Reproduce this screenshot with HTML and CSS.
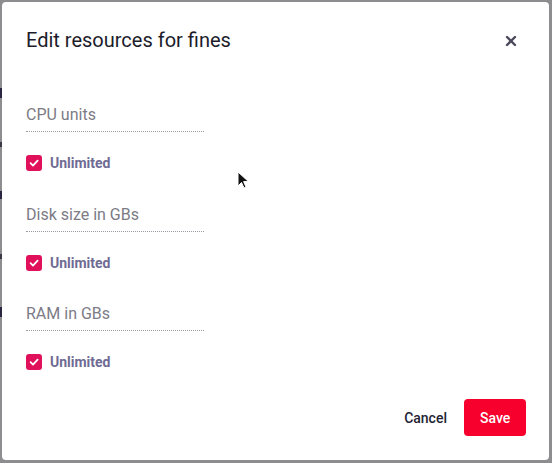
FILE: index.html
```html
<!DOCTYPE html>
<html lang="en">
<head>
<meta charset="utf-8">
<title>Edit resources for fines</title>
<link rel="stylesheet" href="styles.css">
</head>
<body>
<div class="backdrop">
  <div class="edge">
    <span class="mark m1"></span>
    <span class="mark m2"></span>
    <span class="mark m3"></span>
    <span class="mark m4"></span>
    <span class="mark m5"></span>
  </div>
  <div class="dialog">
    <div class="header">
      <h1 class="title">Edit resources for fines</h1>
      <button class="close" aria-label="Close">
        <svg width="12" height="12" viewBox="0 0 12 12"><path d="M2 2 L10 10 M10 2 L2 10" stroke="#4a4a5c" stroke-width="2.4" stroke-linecap="round"/></svg>
      </button>
    </div>
    <div class="fields">
      <div class="group">
        <div class="input">CPU units</div>
        <label class="check"><span class="box"><svg width="12" height="12" viewBox="0 0 12 12"><path d="M2.6 6.2 L5 8.6 L9.6 3.6" fill="none" stroke="#fff" stroke-width="1.8" stroke-linecap="round" stroke-linejoin="round"/></svg></span><span class="check-label">Unlimited</span></label>
      </div>
      <div class="group">
        <div class="input">Disk size in GBs</div>
        <label class="check"><span class="box"><svg width="12" height="12" viewBox="0 0 12 12"><path d="M2.6 6.2 L5 8.6 L9.6 3.6" fill="none" stroke="#fff" stroke-width="1.8" stroke-linecap="round" stroke-linejoin="round"/></svg></span><span class="check-label">Unlimited</span></label>
      </div>
      <div class="group">
        <div class="input">RAM in GBs</div>
        <label class="check"><span class="box"><svg width="12" height="12" viewBox="0 0 12 12"><path d="M2.6 6.2 L5 8.6 L9.6 3.6" fill="none" stroke="#fff" stroke-width="1.8" stroke-linecap="round" stroke-linejoin="round"/></svg></span><span class="check-label">Unlimited</span></label>
      </div>
    </div>
    <div class="actions">
      <button class="btn cancel">Cancel</button>
      <button class="btn save">Save</button>
    </div>
    <svg class="cursor" width="14" height="20" viewBox="0 0 14 20"><path d="M1 1 L1 15 L4.5 11.5 L7 17 L9 16 L6.6 10.6 L11.5 10.6 Z" fill="#111" stroke="#fff" stroke-width="1"/></svg>
  </div>
</div>
</body>
</html>
```

FILE: styles.css
```css
* { box-sizing: border-box; }
html, body { margin: 0; padding: 0; }
body {
  background: #8d8d90;
  font-family: Roboto, "Noto Sans", Arial, sans-serif;
  width: 552px;
  height: 463px;
  overflow: hidden;
}
.backdrop {
  display: flex;
  padding: 2px 3px 3px 0;
  height: 463px;
}
.edge {
  width: 2px;
  flex: none;
  display: flex;
  flex-direction: column;
}
.mark { display: block; width: 2px; background: #2a2540; }
.m1 { height: 10px; margin-top: 86px; }
.m2 { height: 5px; margin-top: 44px; background: #3a3a44; }
.m3 { height: 8px; margin-top: 44px; }
.m4 { height: 5px; margin-top: 55px; background: #3a3a44; }
.m5 { height: 10px; margin-top: 48px; }
.dialog {
  position: relative;
  flex: 1;
  background: #fff;
  border-radius: 4px;
  padding: 24px 23px 24px 24px;
  display: flex;
  flex-direction: column;
}
.header {
  display: flex;
  align-items: center;
  justify-content: space-between;
  height: 28px;
}
.title {
  margin: 0;
  font-size: 20px;
  line-height: 28px;
  font-weight: 400;
  color: #1c1c2b;
}
.close {
  border: 0;
  background: none;
  padding: 0;
  width: 12px;
  height: 12px;
  margin-right: 9px;
  margin-top: 1px;
  display: flex;
}
.fields {
  margin-top: 49px;
  display: flex;
  flex-direction: column;
  gap: 29.6px;
}
.group { display: flex; flex-direction: column; }
.input {
  width: 178px;
  font-size: 16px;
  line-height: 24px;
  color: #7c7b86;
  padding-bottom: 4px;
  border-bottom: 1px dotted #9a9aa2;
}
.check {
  margin-top: 21px;
  display: flex;
  align-items: center;
  height: 20px;
  gap: 8px;
}
.box {
  width: 16px;
  height: 16px;
  border-radius: 3px;
  background: #e0105a;
  display: flex;
  align-items: center;
  justify-content: center;
}
.check-label {
  font-size: 14px;
  font-weight: 700;
  color: #6f6b94;
}
.actions {
  margin-top: auto;
  display: flex;
  justify-content: flex-end;
  align-items: center;
  gap: 1px;
}
.btn {
  font-family: inherit;
  font-size: 14px;
  font-weight: 500;
  height: 37px;
  border: 0;
  border-radius: 4px;
  padding: 0 16px;
  cursor: pointer;
}
.cancel { background: none; color: #1e2433; }
.save { background: #f7002e; color: #fff; width: 62px; }
.cursor {
  position: absolute;
  left: 235px;
  top: 169px;
}
```
